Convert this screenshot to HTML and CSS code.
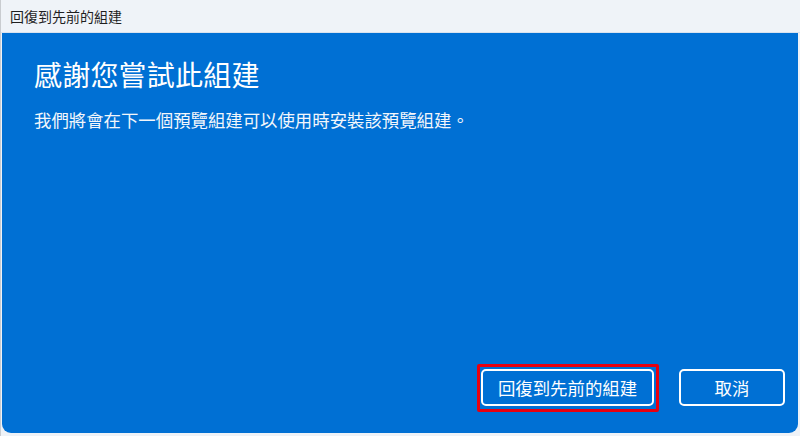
FILE: index.html
```html
<!DOCTYPE html>
<html lang="zh-Hant">
<head>
<meta charset="utf-8">
<link rel="stylesheet" href="styles.css">
</head>
<body>
<div class="window">
  <div class="titlebar">回復到先前的組建</div>
  <div class="panel">
    <h1 class="heading">感謝您嘗試此組建</h1>
    <p class="message">我們將會在下一個預覽組建可以使用時安裝該預覽組建。</p>
    <div class="actions">
      <button class="btn btn-highlight">回復到先前的組建</button>
      <button class="btn">取消</button>
    </div>
  </div>
</div>
</body>
</html>
```
FILE: styles.css
```css
html, body {
  margin: 0;
  padding: 0;
  width: 800px;
  height: 436px;
  overflow: hidden;
  background: #eef2f7;
  font-family: "Noto Sans CJK TC", "Noto Sans", sans-serif;
}

.window {
  display: flex;
  flex-direction: column;
  height: 436px;
  border-left: 1px solid #c9ccd0;
  box-sizing: border-box;
}

.titlebar {
  height: 33px;
  box-sizing: border-box;
  padding-left: 9px;
  display: flex;
  align-items: center;
  font-size: 14px;
  color: #1f1f1f;
  background: #eff3f8;
  border-bottom: 1px solid #d9e3ef;
}

.panel {
  flex: 1;
  margin: 0 2px 3px 1px;
  background: #0070d4;
  border-radius: 0 0 9px 9px;
  padding: 21px 13px 27px 32px;
  display: flex;
  flex-direction: column;
  color: #ffffff;
}

.heading {
  margin: 0;
  font-size: 28px;
  font-weight: 400;
  line-height: 40px;
  letter-spacing: 0.2px;
}

.message {
  margin: 14px 0 0 0;
  font-size: 17.4px;
  line-height: 24px;
  color: #f2f6fb;
}

.actions {
  margin-top: auto;
  display: flex;
  justify-content: flex-end;
  gap: 25px;
}

.btn {
  position: relative;
  height: 37px;
  padding: 0 14px;
  background: #0070d4;
  color: #ffffff;
  border: 2px solid #ffffff;
  border-radius: 5px;
  font-family: "Noto Sans CJK TC", "Noto Sans", sans-serif;
  font-size: 17.4px;
  line-height: 1;
  min-width: 106px;
}

.btn-highlight {
  width: 173px;
}

.btn-highlight::after {
  content: "";
  position: absolute;
  left: -6px;
  top: -7px;
  right: -7px;
  bottom: -8px;
  border: 3px solid #e8000f;
  border-radius: 2px;
}
```
